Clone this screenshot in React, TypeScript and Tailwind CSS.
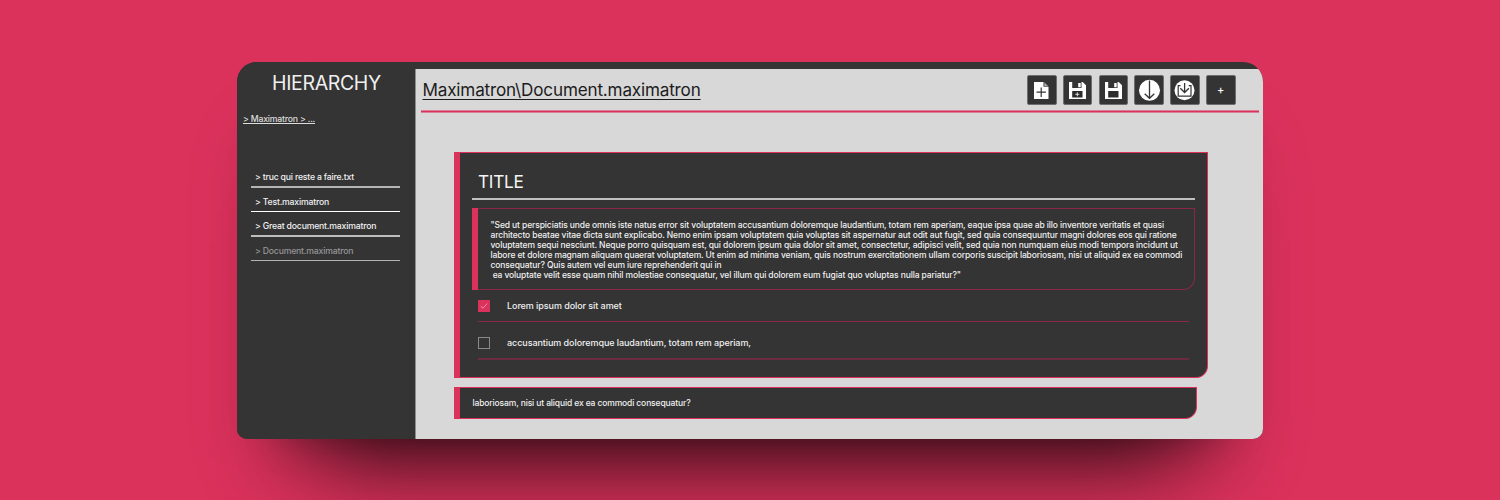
import React from "react";

const files = [
  { name: "truc qui reste a faire.txt", line: "h-[2px] bg-[#b4b4b4]", tone: "text-[#f0f0f0]", row: "h-[25px]" },
  { name: "Test.maximatron", line: "h-px bg-white", tone: "text-[#f0f0f0]", row: "h-[24px]" },
  { name: "Great document.maximatron", line: "h-[2px] bg-[#bdbdbd]", tone: "text-[#f0f0f0]", row: "h-[25px]" },
  { name: "Document.maximatron", line: "h-px bg-[#b4b4b4]", tone: "text-[#969696]", row: "h-[24px]" },
];

const passage = [
  "\"Sed ut perspiciatis unde omnis iste natus error sit voluptatem accusantium doloremque laudantium, totam rem aperiam, eaque ipsa quae ab illo inventore veritatis et quasi",
  "architecto beatae vitae dicta sunt explicabo. Nemo enim ipsam voluptatem quia voluptas sit aspernatur aut odit aut fugit, sed quia consequuntur magni dolores eos qui ratione",
  "voluptatem sequi nesciunt. Neque porro quisquam est, qui dolorem ipsum quia dolor sit amet, consectetur, adipisci velit, sed quia non numquam eius modi tempora incidunt ut",
  "labore et dolore magnam aliquam quaerat voluptatem. Ut enim ad minima veniam, quis nostrum exercitationem ullam corporis suscipit laboriosam, nisi ut aliquid ex ea commodi",
  "consequatur? Quis autem vel eum iure reprehenderit qui in",
  " ea voluptate velit esse quam nihil molestiae consequatur, vel illum qui dolorem eum fugiat quo voluptas nulla pariatur?\"",
];

function NewFileIcon() {
  return (
    <svg width="29" height="29" viewBox="0 0 29 29" fill="none" className="shrink-0">
      <path d="M7 6h9.500v4.800h5V23H7z" fill="#fff" />
      <path d="M17.300 6.300l4 4h-4z" fill="#a8a8a8" />
      <path d="M14.200 11.500v9.500M9.500 16.200h9.400" stroke="#343434" strokeWidth="1.200" />
    </svg>
  );
}

function FloppyIcon({ plus }: { plus?: boolean }) {
  return (
    <svg width="29" height="29" viewBox="0 0 29 29" fill="none" className="shrink-0">
      <path d="M6 6h13.700L23 9.200V23H6z" fill="#fff" />
      <path d="M9.200 6h9.300v6H9.200z" fill="#343434" />
      <path d="M15.200 7h2.500v4.200h-2.500z" fill="#fff" />
      <path d="M9.200 15h10.300v6.600H9.200z" fill="#2b2b2b" />
      {plus && <path d="M14.300 16.300v4M12.300 18.300h4" stroke="#ddd" strokeWidth="1" />}
    </svg>
  );
}

function DownIcon() {
  return (
    <svg width="29" height="29" viewBox="0 0 29 29" fill="none" className="shrink-0">
      <circle cx="14.500" cy="14.300" r="10.500" fill="#fff" />
      <path d="M14.500 4.500v17.800M9.700 17.800l4.800 4.500 4.800-4.500" stroke="#343434" strokeWidth="1.300" />
    </svg>
  );
}

function ImportIcon() {
  return (
    <svg width="29" height="29" viewBox="0 0 29 29" fill="none" className="shrink-0">
      <circle cx="14.500" cy="14.300" r="10" fill="#fff" />
      <path d="M10.500 9.700H8.200V20.200h12.800V9.700h-2.300" stroke="#343434" strokeWidth="1.200" />
      <path d="M14.600 7v9.500M10.300 12.200l4.300 4.300 4.300-4.300" stroke="#343434" strokeWidth="1.300" />
    </svg>
  );
}

function ToolButton({ children }: { children: React.ReactNode }) {
  return (
    <button className="flex h-[30px] w-[29.600px] items-center justify-center rounded-[2px] border border-[#6e6e6e] bg-[#343434] text-white">
      {children}
    </button>
  );
}

function Sidebar() {
  return (
    <aside className="flex w-[178px] shrink-0 flex-col whitespace-nowrap bg-[#343434]">
      <h1 className="mt-[9px] pl-[1px] text-center text-[19.500px] font-normal leading-[24px] tracking-[-0.350px] text-[#f0f0f0]">HIERARCHY</h1>
      <a className="ml-[6px] mt-[18px] self-start text-[8.700px] font-medium leading-[12px] tracking-[-0.200px] text-[#dcdcdc] underline">{"> Maximatron > ..."}</a>
      <ul className="ml-[14px] mt-[46px] w-[150px]">
        {files.map((f) => (
          <li key={f.name} className={`flex flex-col ${f.row}`}>
            <span className={`h-[15px] pl-[4px] text-[8.700px] font-medium leading-[13px] tracking-[-0.200px] ${f.tone}`}>{"> " + f.name}</span>
            <span className={`w-[149px] ${f.line}`} />
          </li>
        ))}
      </ul>
    </aside>
  );
}

function Task({ text, checked }: { text: string; checked?: boolean }) {
  return (
    <div className="flex h-[12px] items-center">
      <span
        className={
          checked
            ? "flex h-[12px] w-[12px] items-center justify-center bg-[#db325c]"
            : "h-[12px] w-[12px] border border-[#8a8a8a]"
        }
      >
        {checked && (
          <svg width="8" height="8" viewBox="0 0 8 8" fill="none">
            <path d="M.8 4.200L3 6.200 7.200 1.600" stroke="#f3a9bb" strokeWidth=".8" />
          </svg>
        )}
      </span>
      <span className="ml-[17px] text-[9px] font-medium leading-[12px] tracking-[-0.070px]">{text}</span>
    </div>
  );
}

export default function App() {
  return (
    <div className="flex h-[500px] w-[1500px] justify-center overflow-hidden bg-[#db325c] pt-[62px] font-['Inter',sans-serif]">
      <div className="flex h-[377px] w-[1026px] overflow-hidden rounded-t-[20px] rounded-b-[10px] bg-[#343434] shadow-[0_50px_70px_-20px_rgba(0,0,0,0.15),0_100px_90px_-80px_rgba(0,0,0,0.75),0_30px_40px_-40px_rgba(0,0,0,0.4)]">
        <Sidebar />
        <main className="mt-[7px] flex w-[848px] flex-col whitespace-nowrap border-l border-[#8c8c8c] bg-[#d8d8d8] text-[#f0f0f0]">
          <header className="mx-[5px] flex h-[41px] w-[838px] items-start justify-between">
            <h2 className="ml-[1.500px] mt-[10px] text-[17.100px] font-normal leading-[22px] tracking-[-0.170px] text-[#1c1c1c] underline decoration-1 underline-offset-[3px]">Maximatron\Document.maximatron</h2>
            <div className="mr-[23.500px] mt-[6px] flex gap-[6.200px]">
              <ToolButton><NewFileIcon /></ToolButton>
              <ToolButton><FloppyIcon plus /></ToolButton>
              <ToolButton><FloppyIcon /></ToolButton>
              <ToolButton><DownIcon /></ToolButton>
              <ToolButton><ImportIcon /></ToolButton>
              <ToolButton><span className="text-[11px] font-medium leading-[12px]">+</span></ToolButton>
            </div>
          </header>
          <div className="mx-[5px] h-[3px] w-[838px] border-y border-[#da7f97] bg-[#db325c]" />

          <section className="ml-[38px] mt-[39px] flex h-[226px] w-[754px] flex-col rounded-br-[12px] border border-l-[6px] border-[#db325c] bg-[#343434] pl-[12px]">
            <h3 className="ml-[6px] mt-[18px] text-[17.200px] font-normal leading-[22px] tracking-[-0.250px] text-[#f4f4f4]">TITLE</h3>
            <div className="mt-[5px] h-[2px] w-[723px] bg-[#c0c0c0]" />
            <div className="mt-[8px] flex h-[82px] w-[723px] rounded-br-[12px] border border-l-0 border-[#8a2947]">
              <div className="-mb-px -mt-px w-[6px] shrink-0 bg-[#db325c]" />
              <div className="ml-[12.500px] mt-[11px] text-[8.500px] font-medium tracking-[-0.116px]">
                {passage.map((line) => (
                  <p key={line} className="h-[10px] whitespace-pre leading-[10px]">{line}</p>
                ))}
              </div>
            </div>
            <div className="ml-[6px] mt-[10px] w-[711px]">
              <Task text="Lorem ipsum dolor sit amet" checked />
              <div className="mt-[9px] h-px bg-[#8a2947]" />
              <div className="mt-[15px]">
                <Task text="accusantium doloremque laudantium, totam rem aperiam," />
              </div>
              <div className="mt-[9px] h-[2px] bg-[#6c2b3e]" />
            </div>
          </section>

          <section className="ml-[38px] mt-[9px] flex h-[32px] w-[743px] items-center rounded-br-[12px] border border-l-[6px] border-[#db325c] bg-[#343434] pl-[12.500px] text-[8.500px] font-medium tracking-[-0.130px]">
            laboriosam, nisi ut aliquid ex ea commodi consequatur?
          </section>
        </main>
      </div>
    </div>
  );
}
